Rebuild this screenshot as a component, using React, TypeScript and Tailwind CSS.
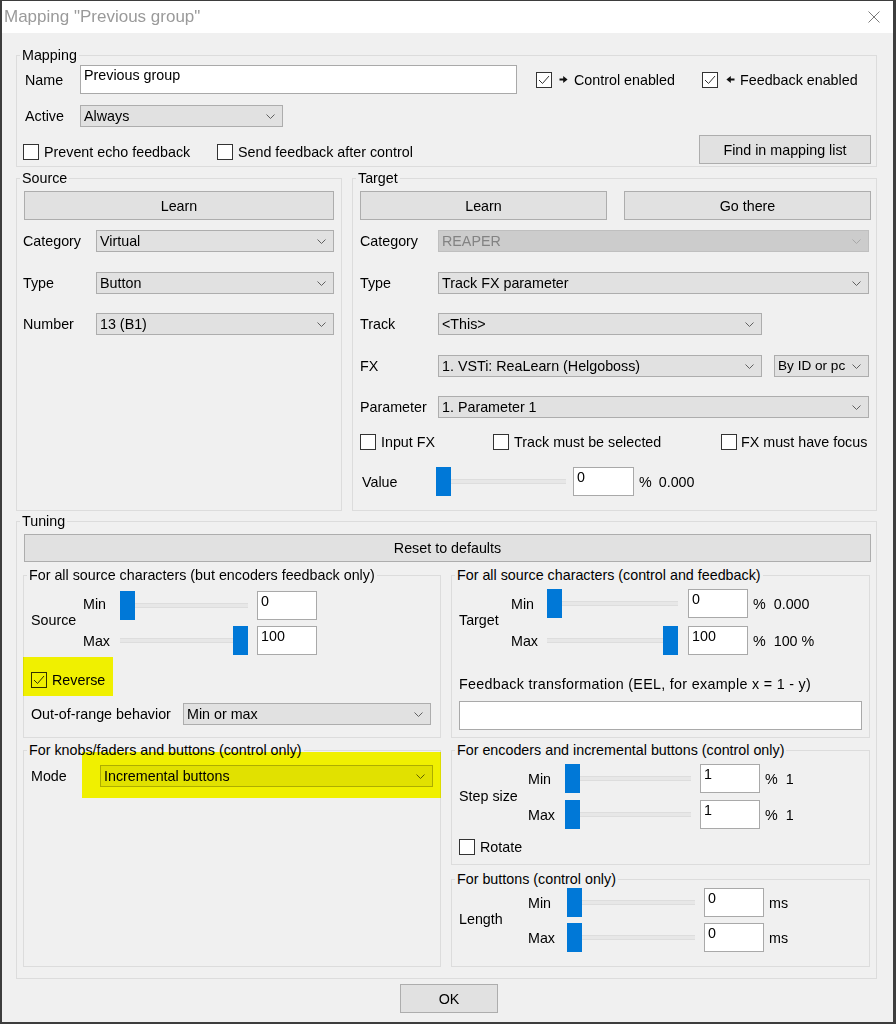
import React from "react";

function Chevron({ color = "#606060" }: { color?: string }) {
  return (
    <svg width="9" height="5" viewBox="0 0 9 5" className="shrink-0">
      <path d="M0.5 0.5 L4.5 4.5 L8.5 0.5" fill="none" stroke={color} strokeWidth="1" />
    </svg>
  );
}

function Combo({ className = "", text, disabled = false }: { className?: string; text: string; disabled?: boolean }) {
  return (
    <div
      className={`flex items-center h-[22px] border pl-[3px] pr-[7px] shrink-0 ${
        disabled ? "bg-[#cccccc] border-[#bfbfbf] text-[#838383]" : "bg-[#e1e1e1] border-[#adadad]"
      } ${className}`}
    >
      <span className="flex-1 whitespace-nowrap overflow-hidden mr-[3px]">{text}</span>
      <Chevron color={disabled ? "#a8a8a8" : "#606060"} />
    </div>
  );
}

function Btn({ className = "", children }: { className?: string; children: React.ReactNode }) {
  return (
    <div className={`flex items-center justify-center border border-[#adadad] bg-[#e1e1e1] shrink-0 ${className}`}>
      {children}
    </div>
  );
}

function Edit({ className = "", children }: { className?: string; children?: React.ReactNode }) {
  return (
    <div className={`h-[29px] bg-white border border-[#a9a9a9] pl-[3px] pt-[1px] shrink-0 whitespace-nowrap ${className}`}>
      {children}
    </div>
  );
}

function Box({ checked = false, className = "bg-white" }: { checked?: boolean; className?: string }) {
  return (
    <div className={`w-[16px] h-[16px] border border-[#333333] shrink-0 flex items-center justify-center ${className}`}>
      {checked && (
        <svg width="14" height="14" viewBox="0 0 14 14">
          <path d="M2 7 L5.5 10.5 L12 3" fill="none" stroke="#333333" strokeWidth="1" />
        </svg>
      )}
    </div>
  );
}

function Slider({ className = "", at }: { className?: string; at: "left" | "right" }) {
  const thumb = <div className="w-[15px] h-[29px] bg-[#0078d7] shrink-0" />;
  const track = <div className="flex-1 h-[5px] bg-[#e7e7e7] border-y border-[#dddddd]" />;
  return (
    <div className={`flex items-center shrink-0 ${className}`}>
      {at === "left" ? (
        <>
          {thumb}
          {track}
        </>
      ) : (
        <>
          {track}
          {thumb}
        </>
      )}
    </div>
  );
}

function Group({ label, className = "", children }: { label: string; className?: string; children?: React.ReactNode }) {
  return (
    <div className={`relative border border-[#dcdcdc] shrink-0 ${className}`}>
      <span className="absolute left-[3px] top-[-9px] bg-[#f0f0f0] px-[2px] leading-[16px] whitespace-nowrap">
        {label}
      </span>
      {children}
    </div>
  );
}

function ArrowRight() {
  return (
    <svg width="9" height="9" viewBox="0 0 9 9" className="shrink-0">
      <path d="M0.5 3.6 H4.2 V1 L8.6 4.5 L4.2 8 V5.4 H0.5 Z" fill="#111111" />
    </svg>
  );
}

function ArrowLeft() {
  return (
    <svg width="9" height="9" viewBox="0 0 9 9" className="shrink-0">
      <path d="M8.5 3.6 H4.8 V1 L0.4 4.5 L4.8 8 V5.4 H8.5 Z" fill="#111111" />
    </svg>
  );
}

export default function App() {
  return (
    <div className="w-[896px] h-[1024px] bg-[#f0f0f0] border-l-[2px] border-r-[3px] border-t-[1px] border-b-[2px] border-[#3d3d3d] flex flex-col text-[14.3px] leading-[16px] text-black font-['Liberation_Sans',Arial,sans-serif] overflow-hidden">
      {/* Title bar */}
      <div className="h-[32px] bg-white flex items-center justify-between shrink-0">
        <span className="ml-[2px] text-[17px] leading-[20px] text-[#9a9a9a]">Mapping "Previous group"</span>
        <svg width="12" height="12" viewBox="0 0 12 12" className="mr-[13px]">
          <path d="M0.5 0.5 L11.5 11.5 M11.5 0.5 L0.5 11.5" stroke="#7a7a7a" strokeWidth="1" />
        </svg>
      </div>

      <div className="flex flex-col pl-[14px]">
        {/* Mapping */}
        <Group label="Mapping" className="mt-[22px] w-[861px] h-[112px]">
          <div className="mt-[9px] h-[29px] flex items-center">
            <span className="ml-[8px] w-[55px] shrink-0">Name</span>
            <Edit className="w-[437px]">Previous group</Edit>
            <div className="ml-[19px] w-[166px] flex items-center shrink-0">
              <Box checked />
              <div className="ml-[7px]">
                <ArrowRight />
              </div>
              <span className="ml-[6px]">Control enabled</span>
            </div>
            <div className="flex items-center">
              <Box checked />
              <div className="ml-[8px]">
                <ArrowLeft />
              </div>
              <span className="ml-[5px]">Feedback enabled</span>
            </div>
          </div>
          <div className="mt-[11px] h-[22px] flex items-center">
            <span className="ml-[8px] w-[55px] shrink-0">Active</span>
            <Combo className="w-[203px]" text="Always" />
          </div>
          <div className="mt-[8px] h-[29px] flex items-start">
            <div className="mt-[9px] ml-[6px] w-[194px] flex items-center shrink-0">
              <Box />
              <span className="ml-[5px]">Prevent echo feedback</span>
            </div>
            <div className="mt-[9px] flex items-center">
              <Box />
              <span className="ml-[5px]">Send feedback after control</span>
            </div>
            <Btn className="ml-auto mr-[5px] w-[172px] h-[29px]">Find in mapping list</Btn>
          </div>
        </Group>

        {/* Source / Target */}
        <div className="mt-[11px] flex">
          <Group label="Source" className="w-[326px] h-[333px]">
            <Btn className="mt-[12px] ml-[7px] w-[310px] h-[29px]">Learn</Btn>
            <div className="mt-[10px] h-[22px] flex items-center">
              <span className="ml-[6px] w-[73px] shrink-0">Category</span>
              <Combo className="w-[238px]" text="Virtual" />
            </div>
            <div className="mt-[20px] h-[22px] flex items-center">
              <span className="ml-[6px] w-[73px] shrink-0">Type</span>
              <Combo className="w-[238px]" text="Button" />
            </div>
            <div className="mt-[19px] h-[22px] flex items-center">
              <span className="ml-[6px] w-[73px] shrink-0">Number</span>
              <Combo className="w-[238px]" text="13 (B1)" />
            </div>
          </Group>

          <Group label="Target" className="ml-[10px] w-[525px] h-[333px]">
            <div className="mt-[12px] ml-[7px] flex">
              <Btn className="w-[247px] h-[29px]">Learn</Btn>
              <Btn className="ml-[17px] w-[247px] h-[29px]">Go there</Btn>
            </div>
            <div className="mt-[10px] h-[22px] flex items-center">
              <span className="ml-[7px] w-[78px] shrink-0">Category</span>
              <Combo className="w-[431px]" text="REAPER" disabled />
            </div>
            <div className="mt-[20px] h-[22px] flex items-center">
              <span className="ml-[7px] w-[78px] shrink-0">Type</span>
              <Combo className="w-[431px]" text="Track FX parameter" />
            </div>
            <div className="mt-[19px] h-[22px] flex items-center">
              <span className="ml-[7px] w-[78px] shrink-0">Track</span>
              <Combo className="w-[324px]" text="<This>" />
            </div>
            <div className="mt-[20px] h-[22px] flex items-center">
              <span className="ml-[7px] w-[78px] shrink-0">FX</span>
              <Combo className="w-[324px]" text="1. VSTi: ReaLearn (Helgoboss)" />
              <Combo className="ml-[12px] w-[95px] text-[13.6px] pr-[6px]" text="By ID or pc" />
            </div>
            <div className="mt-[19px] h-[22px] flex items-center">
              <span className="ml-[7px] w-[78px] shrink-0">Parameter</span>
              <Combo className="w-[431px]" text="1. Parameter 1" />
            </div>
            <div className="mt-[16px] ml-[7px] h-[16px] flex items-center">
              <div className="w-[133px] flex items-center shrink-0">
                <Box />
                <span className="ml-[5px]">Input FX</span>
              </div>
              <div className="w-[228px] flex items-center shrink-0">
                <Box />
                <span className="ml-[5px]">Track must be selected</span>
              </div>
              <div className="flex items-center">
                <Box />
                <span className="ml-[4px]">FX must have focus</span>
              </div>
            </div>
            <div className="mt-[17px] h-[29px] flex items-center">
              <span className="ml-[9px] w-[74px] shrink-0">Value</span>
              <Slider className="w-[130px]" at="left" />
              <Edit className="ml-[7px] w-[61px]">0</Edit>
              <span className="ml-[5px]">%</span>
              <span className="ml-[7px]">0.000</span>
            </div>
          </Group>
        </div>

        {/* Tuning */}
        <Group label="Tuning" className="mt-[10px] w-[861px] h-[458px]">
          <Btn className="mt-[12px] ml-[7px] w-[847px] h-[28px]">Reset to defaults</Btn>
          <div className="mt-[13px] ml-[6px] flex">
            {/* Left column */}
            <div className="flex flex-col">
              <Group label="For all source characters (but encoders feedback only)" className="w-[418px] h-[163px]">
                <div className="flex">
                  <span className="ml-[7px] w-[52px] mt-[36px] self-start shrink-0">Source</span>
                  <div className="flex flex-col">
                    <div className="mt-[15px] h-[29px] flex items-center">
                      <span className="w-[37px] shrink-0 mb-[3px]">Min</span>
                      <Slider className="w-[128px]" at="left" />
                      <Edit className="ml-[9px] w-[60px]">0</Edit>
                    </div>
                    <div className="mt-[6px] h-[29px] flex items-center">
                      <span className="w-[37px] shrink-0">Max</span>
                      <Slider className="w-[128px]" at="right" />
                      <Edit className="ml-[9px] w-[60px]">100</Edit>
                    </div>
                  </div>
                </div>
                <div className="mt-[17px] ml-[7px] h-[16px] flex items-center">
                  <Box checked className="bg-transparent" />
                  <span className="ml-[5px]">Reverse</span>
                </div>
                <div className="mt-[15px] h-[22px] flex items-center">
                  <span className="ml-[7px] w-[152px] shrink-0">Out-of-range behavior</span>
                  <Combo className="w-[248px]" text="Min or max" />
                </div>
                <div className="absolute left-[-1px] top-[81px] w-[90px] h-[39px] bg-[#ffff00] mix-blend-multiply" />
              </Group>

              <Group label="For knobs/faders and buttons (control only)" className="mt-[12px] w-[418px] h-[217px]">
                <div className="mt-[14px] h-[22px] flex items-center">
                  <span className="ml-[7px] w-[69px] shrink-0">Mode</span>
                  <Combo className="w-[333px]" text="Incremental buttons" />
                </div>
                <div className="absolute left-[58px] top-[1px] w-[359px] h-[46px] bg-[#ffff00] mix-blend-multiply" />
              </Group>
            </div>

            {/* Right column */}
            <div className="ml-[10px] flex flex-col">
              <Group label="For all source characters (control and feedback)" className="w-[419px] h-[163px]">
                <div className="flex">
                  <span className="ml-[7px] w-[52px] mt-[36px] self-start shrink-0">Target</span>
                  <div className="flex flex-col">
                    <div className="mt-[13px] h-[29px] flex items-center">
                      <span className="w-[36px] shrink-0">Min</span>
                      <Slider className="w-[131px]" at="left" />
                      <Edit className="ml-[10px] w-[60px]">0</Edit>
                      <span className="ml-[5px]">%</span>
                      <span className="ml-[8px]">0.000</span>
                    </div>
                    <div className="mt-[8px] h-[29px] flex items-center">
                      <span className="w-[36px] shrink-0">Max</span>
                      <Slider className="w-[131px]" at="right" />
                      <Edit className="ml-[10px] w-[60px]">100</Edit>
                      <span className="ml-[5px]">%</span>
                      <span className="ml-[8px]">100 %</span>
                    </div>
                  </div>
                </div>
                <div className="mt-[21px] ml-[7px] tracking-[0.3px]">Feedback transformation (EEL, for example x = 1 - y)</div>
                <Edit className="mt-[9px] ml-[7px] w-[403px]" />
              </Group>

              <Group label="For encoders and incremental buttons (control only)" className="mt-[12px] w-[419px] h-[115px]">
                <div className="flex">
                  <span className="ml-[7px] w-[69px] mt-[37px] self-start shrink-0">Step size</span>
                  <div className="flex flex-col">
                    <div className="mt-[13px] h-[29px] flex items-center">
                      <span className="w-[37px] shrink-0">Min</span>
                      <Slider className="w-[126px]" at="left" />
                      <Edit className="ml-[9px] w-[60px]">1</Edit>
                      <span className="ml-[5px]">%</span>
                      <span className="ml-[8px]">1</span>
                    </div>
                    <div className="mt-[7px] h-[29px] flex items-center">
                      <span className="w-[37px] shrink-0">Max</span>
                      <Slider className="w-[126px]" at="left" />
                      <Edit className="ml-[9px] w-[60px]">1</Edit>
                      <span className="ml-[5px]">%</span>
                      <span className="ml-[8px]">1</span>
                    </div>
                  </div>
                </div>
                <div className="mt-[10px] ml-[7px] h-[16px] flex items-center">
                  <Box />
                  <span className="ml-[5px]">Rotate</span>
                </div>
              </Group>

              <Group label="For buttons (control only)" className="mt-[14px] w-[419px] h-[88px]">
                <div className="flex">
                  <span className="ml-[7px] w-[69px] mt-[31px] self-start shrink-0">Length</span>
                  <div className="flex flex-col">
                    <div className="mt-[8px] h-[29px] flex items-center">
                      <span className="w-[39px] shrink-0">Min</span>
                      <Slider className="w-[128px]" at="left" />
                      <Edit className="ml-[9px] w-[60px]">0</Edit>
                      <span className="ml-[5px]">ms</span>
                    </div>
                    <div className="mt-[6px] h-[29px] flex items-center">
                      <span className="w-[39px] shrink-0">Max</span>
                      <Slider className="w-[128px]" at="left" />
                      <Edit className="ml-[9px] w-[60px]">0</Edit>
                      <span className="ml-[5px]">ms</span>
                    </div>
                  </div>
                </div>
              </Group>
            </div>
          </div>
        </Group>

        <Btn className="mt-[5px] ml-[384px] w-[98px] h-[29px]">OK</Btn>
      </div>
    </div>
  );
}
